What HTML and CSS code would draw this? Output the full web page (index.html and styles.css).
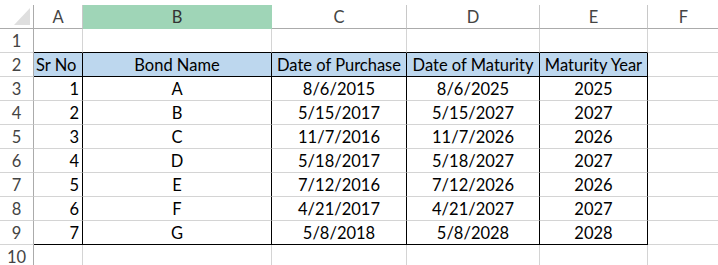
FILE: index.html
```html
<!DOCTYPE html>
<html>
<head>
<meta charset="utf-8">
<link rel="stylesheet" href="styles.css">
</head>
<body>
<div class="sheet">
  <div class="strip"></div>

  <div class="cell corner"><svg class="tri" width="16" height="17" viewBox="0 0 16 17"><polygon points="0,17 16,0 16,17" fill="#dfdfdf"/></svg></div>
  <div class="cell ch">A</div>
  <div class="cell ch sel">B</div>
  <div class="cell ch">C</div>
  <div class="cell ch">D</div>
  <div class="cell ch">E</div>
  <div class="cell ch last">F</div>

  <div class="cell rh">1</div>
  <div class="cell topb"></div>
  <div class="cell topb"></div>
  <div class="cell topb"></div>
  <div class="cell topb"></div>
  <div class="cell topb"></div>
  <div class="cell"></div>

  <div class="cell rh">2</div>
  <div class="cell t head left">Sr No</div>
  <div class="cell t head">Bond Name</div>
  <div class="cell t head">Date of Purchase</div>
  <div class="cell t head">Date of Maturity</div>
  <div class="cell t head">Maturity Year</div>
  <div class="cell"></div>

  <div class="cell rh">3</div>
  <div class="cell t num">1</div>
  <div class="cell t">A</div>
  <div class="cell t">8/6/2015</div>
  <div class="cell t">8/6/2025</div>
  <div class="cell t">2025</div>
  <div class="cell"></div>

  <div class="cell rh">4</div>
  <div class="cell t num">2</div>
  <div class="cell t">B</div>
  <div class="cell t">5/15/2017</div>
  <div class="cell t">5/15/2027</div>
  <div class="cell t">2027</div>
  <div class="cell"></div>

  <div class="cell rh">5</div>
  <div class="cell t num">3</div>
  <div class="cell t">C</div>
  <div class="cell t">11/7/2016</div>
  <div class="cell t">11/7/2026</div>
  <div class="cell t">2026</div>
  <div class="cell"></div>

  <div class="cell rh">6</div>
  <div class="cell t num">4</div>
  <div class="cell t">D</div>
  <div class="cell t">5/18/2017</div>
  <div class="cell t">5/18/2027</div>
  <div class="cell t">2027</div>
  <div class="cell"></div>

  <div class="cell rh">7</div>
  <div class="cell t num">5</div>
  <div class="cell t">E</div>
  <div class="cell t">7/12/2016</div>
  <div class="cell t">7/12/2026</div>
  <div class="cell t">2026</div>
  <div class="cell"></div>

  <div class="cell rh">8</div>
  <div class="cell t num">6</div>
  <div class="cell t">F</div>
  <div class="cell t">4/21/2017</div>
  <div class="cell t">4/21/2027</div>
  <div class="cell t">2027</div>
  <div class="cell"></div>

  <div class="cell rh">9</div>
  <div class="cell t num bot">7</div>
  <div class="cell t bot">G</div>
  <div class="cell t bot">5/8/2018</div>
  <div class="cell t bot">5/8/2028</div>
  <div class="cell t bot">2028</div>
  <div class="cell"></div>

  <div class="cell rh">10</div>
  <div class="cell"></div>
  <div class="cell"></div>
  <div class="cell"></div>
  <div class="cell"></div>
  <div class="cell"></div>
  <div class="cell"></div>
</div>
</body>
</html>
```

FILE: styles.css
```css
html, body {
  margin: 0;
  padding: 0;
  background: #ffffff;
  overflow: hidden;
}

.sheet {
  display: grid;
  grid-template-columns: 34px 49px 189px 135px 133px 108px 71px;
  grid-template-rows: 5px repeat(11, 24px);
  width: 718px;
  height: 265px;
  overflow: hidden;
  font-family: "Lato", "Liberation Sans", sans-serif;
  font-size: 16.5px;
  color: #000;
}

.strip {
  grid-column: 1 / -1;
  background: #fff;
}

.cell {
  box-sizing: border-box;
  border-right: 1px solid #d4d4d4;
  border-bottom: 1px solid #d4d4d4;
  display: flex;
  align-items: center;
  justify-content: center;
  line-height: 23px;
  white-space: nowrap;
  overflow: hidden;
  padding-top: 1px;
}

.corner {
  position: relative;
  border-right: 1px solid #ababab;
  border-bottom: 1px solid #ababab;
}

.tri {
  position: absolute;
  right: 3px;
  bottom: 3px;
}

.ch {
  color: #444;
  border-right: 1px solid #c8c8c8;
  border-bottom: 1px solid #ababab;
}

.ch.sel {
  background: #9fd5b7;
  border-bottom-color: #9fd5b7;
  border-right-color: #9fd5b7;
  color: #333;
}

.ch.last {
  border-right: none;
}

.rh {
  color: #444;
  border-right: 1px solid #ababab;
}

.topb {
  border-bottom: 1px solid #000;
}

.t {
  border-right: 1px solid #000;
}

.head {
  background: #bdd7ee;
  border-bottom: 1px solid #000;
}

.left {
  justify-content: flex-start;
  padding-left: 2px;
}

.num {
  justify-content: flex-end;
  padding-right: 3px;
}

.bot {
  border-bottom: 1px solid #000;
}
```
